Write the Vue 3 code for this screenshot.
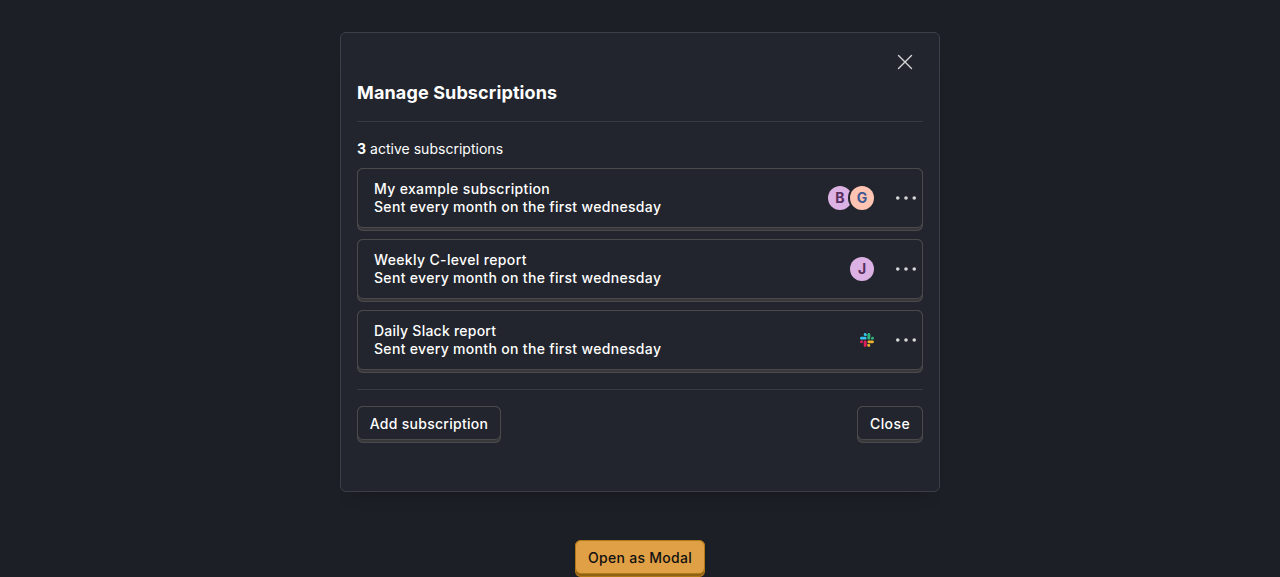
<script setup>
const rows = [
  { title: 'My example subscription', tracking: 0.35, people: [{ letter: 'B', tone: 'lilac' }, { letter: 'G', tone: 'peach' }] },
  { title: 'Weekly C-level report', tracking: 0.35, people: [{ letter: 'J', tone: 'lilac' }] },
  { title: 'Daily Slack report', tracking: 0.23, people: [], slack: true },
]
</script>

<template>
  <main class="page">
    <section class="modal">
      <button class="close" aria-label="Close">
        <svg width="24" height="24" viewBox="0 0 24 24"><path d="M5.5 5.5l13 13M18.5 5.5l-13 13" fill="none" stroke="currentColor" stroke-width="1.4" stroke-linecap="round" /></svg>
      </button>
      <header><h3>Manage Subscriptions</h3></header>
      <div class="content">
        <p class="count"><b>3</b> active subscriptions</p>
        <div class="list">
          <div v-for="row in rows" :key="row.title" class="btn row">
            <div class="face">
              <div class="label">
                <div :style="{ letterSpacing: row.tracking + 'px' }">{{ row.title }}</div>
                <div class="schedule">Sent every month on the first wednesday</div>
              </div>
              <div v-if="row.people.length" class="people">
                <span v-for="p in row.people" :key="p.letter" class="avatar" :class="p.tone">{{ p.letter }}</span>
              </div>
              <svg v-if="row.slack" class="slack" width="14" height="14" viewBox="0 0 122.8 122.8">
                <path d="M25.8 77.6c0 7.1-5.8 12.9-12.9 12.9S0 84.7 0 77.6s5.8-12.9 12.9-12.9h12.9v12.9zm6.5 0c0-7.1 5.8-12.9 12.9-12.9s12.9 5.8 12.9 12.9v32.3c0 7.1-5.8 12.9-12.9 12.9s-12.9-5.8-12.9-12.9V77.6z" fill="#E01E5A" />
                <path d="M45.2 25.8c-7.1 0-12.9-5.8-12.9-12.9S38.1 0 45.2 0s12.9 5.8 12.9 12.9v12.9H45.2zm0 6.5c7.1 0 12.9 5.8 12.9 12.9s-5.8 12.9-12.9 12.9H12.9C5.8 58.1 0 52.3 0 45.2s5.8-12.9 12.9-12.9h32.3z" fill="#36C5F0" />
                <path d="M97 45.2c0-7.1 5.8-12.9 12.9-12.9s12.9 5.8 12.9 12.9-5.8 12.9-12.9 12.9H97V45.2zm-6.5 0c0 7.1-5.8 12.9-12.9 12.9s-12.9-5.8-12.9-12.9V12.9C64.7 5.8 70.5 0 77.6 0s12.9 5.8 12.9 12.9v32.3z" fill="#2EB67D" />
                <path d="M77.6 97c7.1 0 12.9 5.8 12.9 12.9s-5.8 12.9-12.9 12.9-12.9-5.8-12.9-12.9V97h12.9zm0-6.5c-7.1 0-12.9-5.8-12.9-12.9s5.8-12.9 12.9-12.9h32.3c7.1 0 12.9 5.8 12.9 12.9s-5.8 12.9-12.9 12.9H77.6z" fill="#ECB22E" />
              </svg>
              <svg class="dots" width="24" height="24" viewBox="0 0 24 24" fill="currentColor"><circle cx="3.75" cy="12" r="1.8" /><circle cx="12" cy="12" r="1.8" /><circle cx="20.25" cy="12" r="1.8" /></svg>
            </div>
          </div>
        </div>
      </div>
      <footer>
        <button class="btn add"><span class="face">Add subscription</span></button>
        <button class="btn dismiss"><span class="face">Close</span></button>
      </footer>
    </section>
    <button class="btn primary"><span class="face">Open as Modal</span></button>
  </main>
</template>

<style>
html { background: #1d1f27; overflow: hidden; }
</style>

<style scoped>
* { box-sizing: border-box; }
.page {
  height: 577px;
  padding-top: 32px;
  display: flex;
  flex-direction: column;
  align-items: center;
  overflow: hidden;
  background: #1d1f27;
  color: #fff;
  font: 400 14px/20px Inter, sans-serif;
}
.modal {
  position: relative;
  flex: none;
  width: 600px;
  height: 460px;
  margin-bottom: 48px;
  padding: 48px 16px 0;
  border: 1px solid #3d3f44;
  border-radius: 6px;
  background: #22252d;
  box-shadow: 0 16px 16px -16px rgba(0, 0, 0, .35);
}
button { padding: 0; border: 0; background: none; color: inherit; font: inherit; }
.close { position: absolute; top: 17px; right: 22px; width: 24px; height: 24px; color: #d5d6d8; }
.close svg { display: block; }
header { height: 41px; border-bottom: 1px solid #383a42; }
h3 { margin: 0; font-size: 18px; line-height: 24px; font-weight: 700; letter-spacing: .13px; }
.content { padding: 17px 0 16px; border-bottom: 1px solid #383a42; }
.count { margin: 0 0 9px; letter-spacing: .02px; }
.list { display: flex; flex-direction: column; gap: 8px; }
.btn {
  display: block;
  padding-bottom: 3px;
  border-radius: 6px;
  background: #38383b;
  box-shadow: inset 0 0 0 1px #4a4a4c;
  font-weight: 500;
  line-height: 20px;
}
.face {
  display: flex;
  align-items: center;
  justify-content: center;
  height: 34px;
  padding: 2px 0 0;
  border: 1px solid #4a4a4c;
  border-radius: 6px;
  background: #22252d;
}
.add { width: 144px; letter-spacing: .28px; }
.dismiss { width: 66px; letter-spacing: .4px; }
.row .face { height: 60px; padding: 0 4px 0 16px; line-height: 18px; }
.label { flex: 1; }
.schedule { letter-spacing: .32px; }
.people { display: flex; margin-right: 20px; }
.avatar {
  width: 24px;
  height: 24px;
  border-radius: 50%;
  font-size: 14px;
  font-weight: 700;
  line-height: 24px;
  text-align: center;
}
.avatar + .avatar { margin-left: -2px; box-shadow: 0 0 0 2px #22252d; }
.lilac { background: #dcb1e3; color: #572e5e; }
.peach { background: #ffc4b2; color: #3e5891; }
.slack { margin-right: 20px; }
.dots { color: #d5d6d8; }
footer { display: flex; justify-content: space-between; padding-top: 16px; }
.primary { flex: none; width: 130px; background: #8f6218; box-shadow: inset 0 0 0 1px #b17816; letter-spacing: .29px; }
.primary .face { border-color: #b17816; background: #e0a045; color: #111; }
</style>
